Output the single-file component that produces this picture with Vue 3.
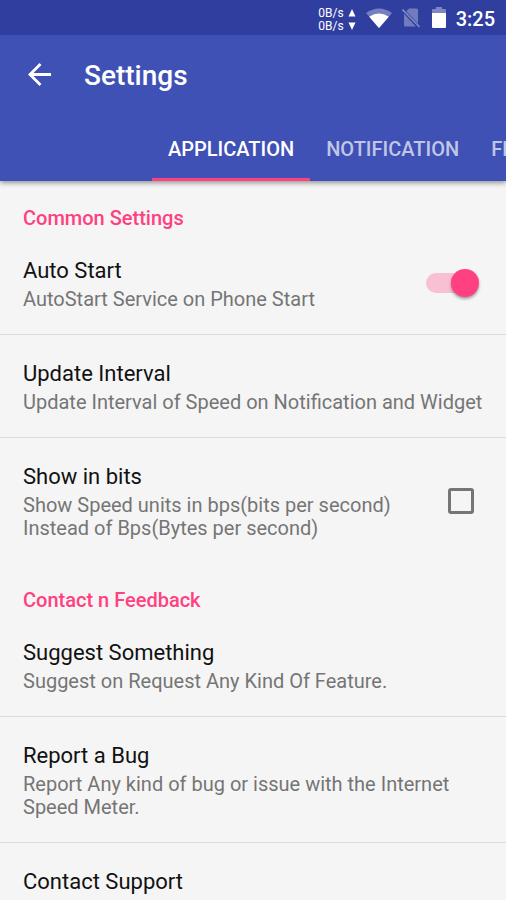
<script setup>
import { ref } from 'vue'

const autoStart = ref(true)
const showBits = ref(false)
const tabs = ['Application', 'Notification', 'Fl']
const active = ref('Application')
</script>

<template>
  <div class="screen">
    <div class="status">
      <div class="speed">
        <div class="rate"><span>0B/s</span><svg width="8" height="8" viewBox="0 0 8 8"><path d="M4 0 7.5 7.5h-7z" fill="#fff" /></svg></div>
        <div class="rate"><span>0B/s</span><svg width="8" height="8" viewBox="0 0 8 8"><path d="M4 8 .5.5h7z" fill="#fff" /></svg></div>
      </div>
      <svg class="wifi" width="26" height="20" viewBox="0 0 26 20">
        <path d="M13 20 0 5Q13-4 26 5z" fill="#7680c0" />
        <path d="M13 20 3.2 8.7Q13 2.4 22.800 8.700z" fill="#fff" />
      </svg>
      <svg class="sim" width="18" height="20" viewBox="0 0 18 20">
        <path d="M7 .5h7.500q1.500 0 1.500 1.500V15.500L4.300 3.300zM2 5.800 13.800 18.500H3.500Q2 18.500 2 17z" fill="#727cbd" />
        <path d="M.5 1.500 17.500 19" stroke="#7f89c4" stroke-width="1.600" />
      </svg>
      <svg class="battery" width="14" height="21" viewBox="0 0 14 21">
        <path d="M4 0h6v2h3q1 0 1 1v3H0V3q0-1 1-1h3z" fill="#7d87c3" />
        <path d="M0 6h14v14q0 1-1 1H1q-1 0-1-1z" fill="#fff" />
      </svg>
      <span class="time">3:25</span>
    </div>
    <header class="bar">
      <div class="title-row">
        <button class="back" aria-label="Back">
          <svg width="24" height="24" viewBox="0 0 24 24"><path d="M23 11.500H3M12.500 1 2 11.500 12.500 22" fill="none" stroke="#fff" stroke-width="2.800" /></svg>
        </button>
        <h1>Settings</h1>
      </div>
      <nav class="tabs">
        <button v-for="t in tabs" :key="t" class="tab" :class="{ on: active === t }" @click="active = t">{{ t }}</button>
      </nav>
    </header>
    <main>
      <section>
        <h2>Common Settings</h2>
        <label class="item">
          <span class="text"><span class="name">Auto Start</span><span class="desc">AutoStart Service on Phone Start</span></span>
          <input v-model="autoStart" class="switch" type="checkbox" role="switch" />
        </label>
        <button class="item"><span class="text"><span class="name">Update Interval</span><span class="desc">Update Interval of Speed on Notification and Widget</span></span></button>
        <label class="item">
          <span class="text"><span class="name">Show in bits</span><span class="desc">Show Speed units in bps(bits per second) Instead of Bps(Bytes per second)</span></span>
          <input v-model="showBits" class="box" type="checkbox" />
        </label>
      </section>
      <section>
        <h2>Contact n Feedback</h2>
        <button class="item"><span class="text"><span class="name">Suggest Something</span><span class="desc">Suggest on Request Any Kind Of Feature.</span></span></button>
        <button class="item"><span class="text"><span class="name">Report a Bug</span><span class="desc">Report Any kind of bug or issue with the Internet Speed Meter.</span></span></button>
        <button class="item"><span class="text"><span class="name">Contact Support</span></span></button>
      </section>
    </main>
  </div>
</template>

<style>
body { margin: 0; background: #f5f5f5; }
</style>

<style scoped>
.screen { height: 100vh; display: flex; flex-direction: column; overflow: hidden; font-family: Roboto, "Noto Sans", sans-serif; color: #111; background: #f5f5f5; }
button { font: inherit; color: inherit; background: none; border: 0; padding: 0; text-align: left; cursor: pointer; }
svg { display: block; }
.status { flex: none; height: 35px; box-sizing: border-box; padding-right: 11px; background: #303f9f; color: #fff; display: flex; align-items: center; justify-content: flex-end; }
.speed { font-size: 12px; line-height: 13px; margin-right: 10px; padding-top: 4px; }
.rate { display: flex; align-items: center; gap: 4px; }
.wifi { margin-right: 10px; }
.sim { margin-right: 12px; }
.battery { margin-right: 10px; }
.time { font-size: 20px; font-weight: 500; padding-top: 2px; }
.bar { flex: none; background: #3f51b5; color: #fff; box-shadow: 0 2px 5px rgba(0, 0, 0, .4); clip-path: inset(0 0 -8px 0); }
.title-row { height: 81px; display: flex; align-items: center; padding-left: 28px; gap: 32px; }
.back { display: flex; padding-bottom: 2px; }
h1 { margin: 0; font-size: 28px; font-weight: 500; }
.tabs { display: flex; padding-left: 152px; overflow: hidden; }
.tab { flex: none; height: 65px; box-sizing: border-box; padding: 0 16px; border-top: 3px solid transparent; border-bottom: 3px solid transparent; font-size: 20px; font-weight: 500; text-transform: uppercase; color: #c0c6e6; }
.tab.on { color: #fff; border-bottom-color: #ff4081; }
main { flex: 1; min-height: 0; overflow: hidden; margin-top: 4px; }
h2 { margin: 0; padding: 24px 23px 0; font-size: 20px; line-height: 26px; font-weight: 500; color: #ff4081; }
main section:first-child h2 { padding-top: 20px; }
.item { width: 100%; box-sizing: border-box; display: flex; align-items: center; gap: 16px; padding: 24px 23px 23px; border-bottom: 1px solid #dcdcdc; }
h2 + .item { padding-top: 25px; }
section > .item:last-child { border-bottom: 0; }
.text { flex: 1; display: block; }
.name, .desc { display: block; }
.name { font-size: 22px; line-height: 30px; }
.desc { margin-top: 2px; font-size: 20px; line-height: 23px; color: #757575; }
.switch { appearance: none; margin: 0 4px 2px 0; width: 53px; height: 28px; flex: none; display: flex; align-items: center; }
.switch::before { content: ""; flex: none; width: 45px; height: 20px; margin-right: -20px; border-radius: 10px; background: #f9bfd3; }
.switch::after { content: ""; flex: none; width: 28px; height: 28px; border-radius: 50%; background: #bdbdbd; box-shadow: 0 2px 3px rgba(0, 0, 0, .35); }
.switch:not(:checked) { flex-direction: row-reverse; }
.switch:not(:checked)::before { margin: 0 0 0 -20px; background: #dcdcdc; }
.switch:checked::after { background: #ff4081; }
.box { appearance: none; box-sizing: border-box; margin: 0 9px 1px 0; width: 26px; height: 26px; border: 3px solid #757575; border-radius: 3px; flex: none; }
.box:checked { background: #ff4081; border-color: #ff4081; }
</style>
